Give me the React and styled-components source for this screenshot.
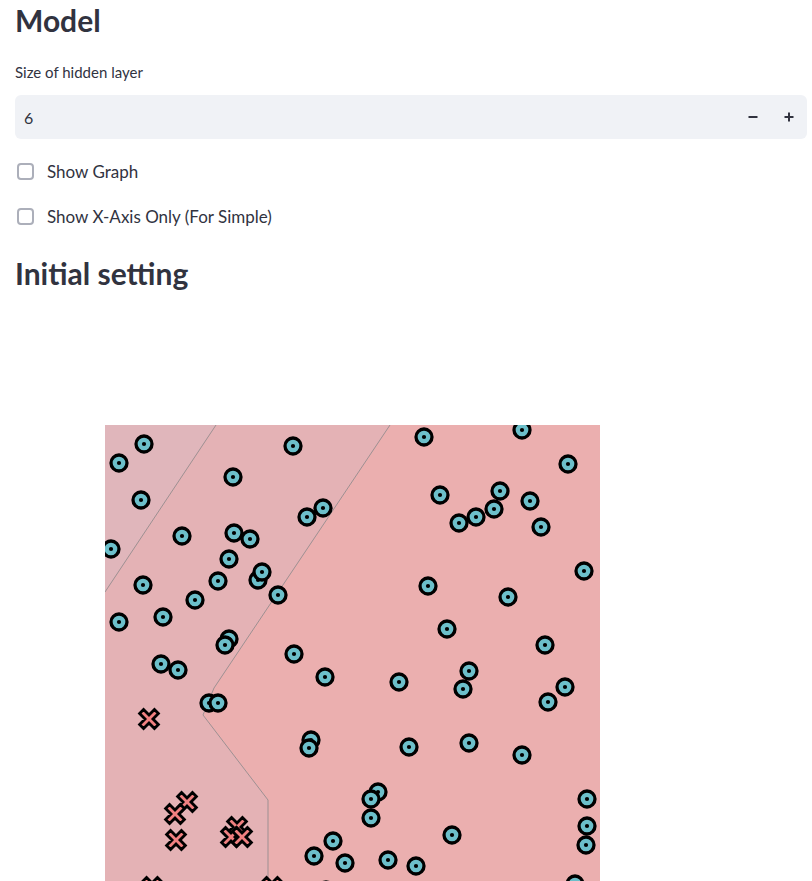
import styled, { createGlobalStyle } from 'styled-components'

const AXES_X = 105
const AXES_Y = 425

const circles = [
    [144, 444], [119, 463], [293, 446], [424, 437], [522, 430], [568, 464], [233, 477], [141, 500],
    [440, 495], [500, 491], [530, 501], [307, 517], [323, 508], [459, 523], [476, 517], [494, 509],
    [541, 527], [111, 549], [182, 536], [234, 533], [250, 539], [229, 559], [258, 580], [262, 572],
    [218, 581], [143, 585], [584, 571], [428, 586], [278, 595], [195, 600], [508, 597], [119, 622],
    [163, 617], [447, 629], [229, 639], [225, 645], [294, 654], [545, 645], [161, 664], [178, 670],
    [325, 677], [399, 682], [469, 671], [463, 689], [565, 687], [548, 702], [209, 703], [218, 703],
    [311, 740], [309, 748], [409, 747], [469, 743], [522, 755], [378, 792], [371, 799], [371, 818],
    [587, 799], [452, 835], [333, 841], [314, 856], [345, 863], [388, 860], [416, 866], [587, 826],
    [586, 845], [575, 884], [326, 890],
]

const crosses = [
    [149, 719], [187, 802], [175, 814], [176, 840], [237, 827], [231, 837], [242, 837],
    [152, 887], [272, 887],
]

const GlobalStyle = createGlobalStyle`
    html, body {
        margin: 0;
        padding: 0;
        overflow: hidden;
        background: #ffffff;
    }
    body {
        font-family: Lato, "Noto Sans", sans-serif;
        color: rgb(49, 51, 63);
    }
`

function CircleMarker({ x, y }) {
    return (
        <g transform={`translate(${x - AXES_X} ${y - AXES_Y})`}>
            <circle r="8" fill="#6cbfca" stroke="#000" strokeWidth="3.3" />
            <circle r="2.1" fill="#000" />
        </g>
    )
}

function CrossMarker({ x, y }) {
    const L = 10.5
    const w = 2.8
    const d = `M${-w},${-L} H${w} V${-w} H${L} V${w} H${w} V${L} H${-w} V${w} H${-L} V${-w} H${-w} Z`
    return (
        <path
            d={d}
            transform={`translate(${x - AXES_X} ${y - AXES_Y}) rotate(45)`}
            fill="#f08080"
            stroke="#000"
            strokeWidth="2.8"
            strokeLinejoin="miter"
        />
    )
}

function DecisionPlot() {
    return (
        <Plot width="495" height="495" viewBox="0 0 495 495">
            <rect width="495" height="495" fill="#e4b2b5" />
            <polygon points="0,0 111,0 0,167" fill="#e0b6bb" />
            <polygon points="285,0 495,0 495,495 163,495 163,375 98,290 109,263" fill="#ebafaf" />
            <polyline points="111,0 0,167" fill="none" stroke="#9d9092" strokeWidth="1" />
            <polyline points="285,0 109,263 98,290 163,375 163,495" fill="none" stroke="#9d9092" strokeWidth="1" />
            {circles.map(([x, y], i) => <CircleMarker key={'c' + i} x={x} y={y} />)}
            {crosses.map(([x, y], i) => <CrossMarker key={'x' + i} x={x} y={y} />)}
        </Plot>
    )
}

function Checkbox({ label }) {
    return (
        <CheckRow>
            <Box />
            <CheckLabel>{label}</CheckLabel>
        </CheckRow>
    )
}

export default function App() {
    return (
        <Page>
            <GlobalStyle />
            <Heading>Model</Heading>
            <Label>Size of hidden layer</Label>
            <NumberBox>
                <Value>6</Value>
                <StepButton aria-label="decrement">
                    <svg width="10" height="10" viewBox="0 0 10 10">
                        <rect x="0.5" y="4" width="9" height="2" fill="currentColor" />
                    </svg>
                </StepButton>
                <StepButton aria-label="increment">
                    <svg width="10" height="10" viewBox="0 0 10 10">
                        <rect x="0.5" y="4" width="9" height="2" fill="currentColor" />
                        <rect x="4" y="0.5" width="2" height="9" fill="currentColor" />
                    </svg>
                </StepButton>
            </NumberBox>
            <Checks>
                <Checkbox label="Show Graph" />
                <Checkbox label="Show X-Axis Only (For Simple)" />
            </Checks>
            <Heading $top={30}>Initial setting</Heading>
            <Figure>
                <DecisionPlot />
            </Figure>
        </Page>
    )
}

const Page = styled.div`
    width: 792px;
    padding: 2px 5px 0 15px;
    box-sizing: content-box;
`;

const Heading = styled.h2`
    margin: ${p => p.$top || 0}px 0 0;
    font-family: Lato, "Noto Sans", sans-serif;
    font-size: 30px;
    font-weight: 700;
    line-height: 36px;
    color: rgb(49, 51, 63);
`;

const Label = styled.div`
    margin-top: 26px;
    font-size: 15px;
    line-height: 17px;
    color: rgb(49, 51, 63);
`;

const NumberBox = styled.div`
    margin-top: 14px;
    height: 44px;
    display: flex;
    align-items: center;
    background: #f0f2f6;
    border-radius: 6px;
    padding: 0 0 0 9px;
`;

const Value = styled.span`
    flex: 1;
    font-size: 16px;
    color: rgb(49, 51, 63);
`;

const StepButton = styled.span`
    width: 36px;
    height: 44px;
    display: flex;
    align-items: center;
    justify-content: center;
    color: rgb(49, 51, 63);
`;

const Checks = styled.div`
    margin-top: 23px;
    display: flex;
    flex-direction: column;
    gap: 27px;
`;

const CheckRow = styled.label`
    display: flex;
    align-items: center;
    gap: 13px;
    height: 18px;
    padding-left: 2px;
`;

const Box = styled.span`
    width: 17px;
    height: 17px;
    box-sizing: border-box;
    border: 2px solid #acafba;
    border-radius: 4px;
    background: #fff;
`;

const CheckLabel = styled.span`
    font-size: 17px;
    color: rgb(49, 51, 63);
`;

const Figure = styled.div`
    padding: 134px 0 0 90px;
`;

const Plot = styled.svg`
    display: block;
`;
